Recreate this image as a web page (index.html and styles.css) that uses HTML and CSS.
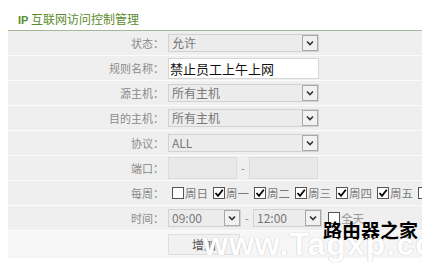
FILE: index.html
```html
<!DOCTYPE html>
<html>
<head>
<meta charset="utf-8">
<link rel="stylesheet" href="styles.css">
</head>
<body>
<div class="page">
  <div class="title"><b>IP</b> 互联网访问控制管理</div>
  <div class="form">
    <div class="row">
      <div class="label">状态：</div>
      <div class="value"><span class="select w150"><span class="txt">允许</span><span class="arrow"><svg width="8" height="6" viewBox="0 0 8 6"><path d="M1 1.5 L4 4.5 L7 1.5" fill="none" stroke="#333" stroke-width="1.6"/></svg></span></span></div>
    </div>
    <div class="row">
      <div class="label">规则名称：</div>
      <div class="value"><span class="input w150">禁止员工上午上网</span></div>
    </div>
    <div class="row">
      <div class="label">源主机：</div>
      <div class="value"><span class="select w150"><span class="txt">所有主机</span><span class="arrow"><svg width="8" height="6" viewBox="0 0 8 6"><path d="M1 1.5 L4 4.5 L7 1.5" fill="none" stroke="#333" stroke-width="1.6"/></svg></span></span></div>
    </div>
    <div class="row">
      <div class="label">目的主机：</div>
      <div class="value"><span class="select w150"><span class="txt">所有主机</span><span class="arrow"><svg width="8" height="6" viewBox="0 0 8 6"><path d="M1 1.5 L4 4.5 L7 1.5" fill="none" stroke="#333" stroke-width="1.6"/></svg></span></span></div>
    </div>
    <div class="row">
      <div class="label">协议：</div>
      <div class="value"><span class="select w150"><span class="txt">ALL</span><span class="arrow"><svg width="8" height="6" viewBox="0 0 8 6"><path d="M1 1.5 L4 4.5 L7 1.5" fill="none" stroke="#333" stroke-width="1.6"/></svg></span></span></div>
    </div>
    <div class="row">
      <div class="label">端口：</div>
      <div class="value"><span class="input disabled w69"></span><span class="dash">-</span><span class="input disabled w69"></span></div>
    </div>
    <div class="row">
      <div class="label">每周：</div>
      <div class="value days">
        <span class="day"><span class="cb"></span>周日</span>
        <span class="day"><span class="cb"><svg width="10" height="10" viewBox="0 0 10 10"><path d="M1.5 5 L4 7.8 L8.8 1.8" fill="none" stroke="#000" stroke-width="1.8"/></svg></span>周一</span>
        <span class="day"><span class="cb"><svg width="10" height="10" viewBox="0 0 10 10"><path d="M1.5 5 L4 7.8 L8.8 1.8" fill="none" stroke="#000" stroke-width="1.8"/></svg></span>周二</span>
        <span class="day"><span class="cb"><svg width="10" height="10" viewBox="0 0 10 10"><path d="M1.5 5 L4 7.8 L8.8 1.8" fill="none" stroke="#000" stroke-width="1.8"/></svg></span>周三</span>
        <span class="day"><span class="cb"><svg width="10" height="10" viewBox="0 0 10 10"><path d="M1.5 5 L4 7.8 L8.8 1.8" fill="none" stroke="#000" stroke-width="1.8"/></svg></span>周四</span>
        <span class="day"><span class="cb"><svg width="10" height="10" viewBox="0 0 10 10"><path d="M1.5 5 L4 7.8 L8.8 1.8" fill="none" stroke="#000" stroke-width="1.8"/></svg></span>周五</span>
        <span class="day"><span class="cb"></span>周六</span>
      </div>
    </div>
    <div class="row">
      <div class="label">时间：</div>
      <div class="value">
        <span class="select w72"><span class="txt">09:00</span><span class="arrow"><svg width="8" height="6" viewBox="0 0 8 6"><path d="M1 1.5 L4 4.5 L7 1.5" fill="none" stroke="#333" stroke-width="1.6"/></svg></span></span>
        <span class="dash">-</span>
        <span class="select w69"><span class="txt">12:00</span><span class="arrow"><svg width="8" height="6" viewBox="0 0 8 6"><path d="M1 1.5 L4 4.5 L7 1.5" fill="none" stroke="#333" stroke-width="1.6"/></svg></span></span>
        <span class="day allday"><span class="cb"></span>全天</span>
      </div>
    </div>
    <div class="row btnrow">
      <div class="label"></div>
      <div class="value"><span class="btn">增加</span></div>
    </div>
  </div>
  <div class="wm-cn">路由器之家</div>
  <div class="wm-en">www.Tagxp.com</div>
</div>
</body>
</html>
```
FILE: styles.css
```css
html, body {
  margin: 0;
  padding: 0;
  background: #ffffff;
}
.page {
  position: relative;
  width: 422px;
  height: 265px;
  overflow: hidden;
  font-family: "Noto Sans CJK SC", "Open Sans", sans-serif;
}
.title {
  height: 30px;
  line-height: 37px;
  font-size: 12px;
  color: #5a8c2b;
  border-bottom: 1px solid #a4b898;
  margin-left: 8px;
  padding-left: 10px;
}
.title b {
  font-family: "Liberation Sans", sans-serif;
  font-weight: bold;
  font-size: 11px;
}
.form {
  margin-left: 8px;
}
.row {
  display: flex;
  height: 24px;
  border-bottom: 1px solid #fbfbfb;
  background: #efefef;
}
.label {
  width: 156px;
  padding-right: 4px;
  text-align: right;
  font-size: 11px;
  line-height: 24px;
  color: #8a8a8a;
  flex: none;
}
.value {
  display: flex;
  align-items: center;
  font-size: 12px;
  color: #7a7a7a;
}
.select {
  box-sizing: border-box;
  height: 18px;
  border: 1px solid #d2d2d2;
  background: #ececec;
  display: flex;
  align-items: center;
  justify-content: space-between;
  color: #777;
  font-size: 12px;
}
.select .txt {
  padding-left: 3px;
  line-height: 16px;
}
.select .arrow {
  box-sizing: border-box;
  width: 16px;
  height: 16px;
  border: 1px solid #a9a9a9;
  background: #f1f1f1;
  display: flex;
  align-items: center;
  justify-content: center;
}
.w150 { width: 151px; }
.w72 { width: 73px; }
.w69 { width: 69px; }
.input {
  box-sizing: border-box;
  height: 21px;
  border: 1px solid #d6d6d6;
  background: #ffffff;
  color: #111;
  font-size: 13px;
  line-height: 19px;
  padding-left: 1px;
}
.input.disabled {
  height: 22px;
  background: #e9e9e9;
  border-color: #dcdcdc;
}
.dash {
  width: 12px;
  text-align: center;
  color: #888;
  font-size: 11px;
}
.day {
  display: flex;
  align-items: center;
  width: 41px;
  flex: none;
  color: #7a7a7a;
  font-size: 11.5px;
}
.days .day:first-child {
  margin-left: 4px;
}
.cb {
  box-sizing: border-box;
  width: 12px;
  height: 12px;
  border: 1px solid #555;
  background: #fff;
  margin-right: 1px;
  display: flex;
  align-items: center;
  justify-content: center;
}
.allday {
  margin-left: 6px;
  color: #9a9a9a;
}
.btnrow {
  height: 27px;
  background: #f6f6f6;
  border-bottom: none;
}
.btnrow .value {
  align-items: flex-start;
  padding-top: 3px;
}
.btn {
  box-sizing: border-box;
  width: 72px;
  height: 21px;
  border: 1px solid #dedede;
  background: #f1f1f1;
  color: #555;
  font-size: 12px;
  line-height: 19px;
  text-align: center;
}
.wm-cn {
  position: absolute;
  left: 323px;
  top: 216px;
  font-size: 19px;
  font-weight: bold;
  color: #000;
  font-family: "Noto Sans CJK SC", sans-serif;
}
.wm-en {
  position: absolute;
  left: 203px;
  top: 226px;
  font-family: "Liberation Sans", sans-serif;
  font-weight: bold;
  font-size: 32px;
  color: #ffffff;
  text-shadow: 0 0 1px #aaa;
  letter-spacing: 1px;
}
```
